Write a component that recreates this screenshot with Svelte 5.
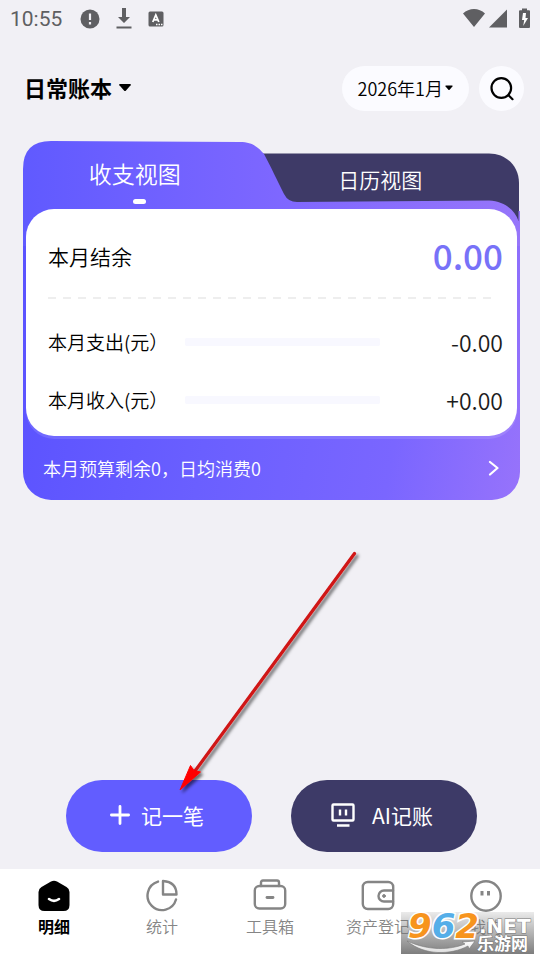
<script>
  const rows = [
    { id: 'expense', label: '本月支出(元）', value: '-0.00' },
    { id: 'income', label: '本月收入(元）', value: '+0.00' }
  ];
  const nav = [
    { id: 'detail', label: '明细' },
    { id: 'stats', label: '统计' },
    { id: 'tools', label: '工具箱' },
    { id: 'assets', label: '资产登记' },
    { id: 'mine', label: '我的' }
  ];
  let view = $state('flow');
  let page = $state('detail');
</script>

<div class="app">
  <div class="status">
    <span class="clock">10:55</span>
    <svg class="s-alert" width="20" height="20" viewBox="0 0 20 20"><circle cx="10" cy="10" r="9.5" fill="#5f5f62" /><path d="M10 4.5v6.5M10 13v2.4" stroke="#f1f0f5" stroke-width="2.2" /></svg>
    <svg class="s-down" width="16" height="21" viewBox="0 0 16 21" fill="#5f5f62"><path d="M6 0h4v9h4l-6 6-6-6h4zM0.500 18.500h15v2h-15z" /></svg>
    <svg width="16" height="16" viewBox="0 0 16 16"><rect x="0.500" y="0.500" width="15" height="15" rx="1.500" fill="#5f5f62" /><path d="M4.800 11 7.800 4 10.800 11M5.800 8.800h4" fill="none" stroke="#fff" stroke-width="1.800" /><path d="M8 13.500h1.500M10.500 13.500H12M13 13.500h1.500" stroke="#fff" stroke-width="1.300" /></svg>
    <span class="grow"></span>
    <svg class="signals" width="67" height="20" viewBox="0 0 67 20" fill="#5f5f62">
      <path d="M0 5.500C6-0.500 16-0.500 22 5.500L11 19zM44 1.500V19.500H26zM66 2.200h-2V0.500h-5v1.700h-2q-1 0-1 1V19q0 1 1 1h9q1 0 1-1V3.200q0-1-1-1z" />
      <path d="M63 5h-3l-1 7h2.200l-1 6 4.800-8h-2.500z" fill="#fff" />
    </svg>
  </div>

  <header>
    <button class="book">日常账本 <svg width="14" height="9" viewBox="0 0 14 9"><path d="M2 1h10q1.500 0 0.600 1.200L8 7.500q-1 1-2 0L1.400 2.200Q0.500 1 2 1z" /></svg></button>
    <span class="grow"></span>
    <button class="month">2026年1月<svg width="8" height="6" viewBox="0 0 8 6"><path d="M1 0.500h6q1 0 0.400 0.900L4.600 4.700q-0.600 0.600-1.200 0L0.600 1.400Q0 0.500 1 0.500z" /></svg></button>
    <button class="search" aria-label="搜索"><svg width="24" height="24" viewBox="0 0 24 24" fill="none" stroke="#000" stroke-width="2.200" stroke-linecap="round"><circle cx="11.300" cy="11" r="9.800" /><path d="m18.500 18.200 4 4" /></svg></button>
  </header>

  <main>
    <section class="card">
      <svg class="shape" viewBox="0 0 497 105" preserveAspectRatio="none" aria-hidden="true">
        <defs>
          <linearGradient id="tabFill" x1="0" y1="0" x2="1" y2="0">
            <stop offset="0" stop-color="#605aff" />
            <stop offset="0.550" stop-color="#8068ff" />
            <stop offset="1" stop-color="#9675fa" />
          </linearGradient>
        </defs>
        <path d="M225 12.500H466C483 12.500 496 25 496 42V90H225z" fill="#3e3a67" />
        <path d="M0 105V28Q0 0 28 0L217 1C230 1 236 7 241 13C247 24 255 41 261 53Q265 61 274 61L466 59.500C482 60 492 70 495.500 80V70H497V105z" fill="url(#tabFill)" />
      </svg>
      <div class="tabs" role="tablist">
        <button class="tab flow" role="tab" aria-selected={view === 'flow'} onclick={() => (view = 'flow')}><span>收支视图</span><i></i></button>
        <button class="tab calendar" role="tab" aria-selected={view === 'calendar'} onclick={() => (view = 'calendar')}><span>日历视图</span></button>
      </div>
      <div class="panel">
        <div class="balance"><span>本月结余</span><strong>0.00</strong></div>
        <div class="dashes"></div>
        {#each rows as row}
          <div class="row">
            <label for={row.id}>{row.label}</label>
            <progress id={row.id} value="0" max="1"></progress>
            <span class="amount">{row.value}</span>
          </div>
        {/each}
      </div>
      <a class="budget" href="#budget">
        <span>本月预算剩余0，日均消费0</span>
        <svg width="12" height="16" viewBox="0 0 12 16" fill="none" stroke="#fff" stroke-width="2.200" stroke-linecap="round" stroke-linejoin="round"><path d="m2 2 7.500 6L2 14.500" /></svg>
      </a>
    </section>
  </main>

  <div class="actions">
    <button class="add">
      <svg width="20" height="20" viewBox="0 0 20 20" stroke="#fff" stroke-width="2.800" stroke-linecap="round"><path d="M10 1.400v17.200M1.400 10h17.200" /></svg>
      记一笔
    </button>
    <button class="ai">
      <svg width="24" height="24" viewBox="0 0 24 24" fill="none" stroke="#fff" stroke-width="2.400"><rect x="1.500" y="1.500" width="21" height="16" rx="1" /><path d="M9 6.500v6M15 6.500v6M6 22.500h12.500" /></svg>
      AI记账
    </button>
    <svg class="arrow" width="190" height="250" viewBox="0 0 190 250" aria-hidden="true">
      <defs><filter id="soft" x="-10%" y="-10%" width="120%" height="120%"><feDropShadow dx="2.500" dy="2.500" stdDeviation="1.800" flood-color="#000" flood-opacity="0.550" /></filter></defs>
      <g filter="url(#soft)">
        <path d="M178.500 3.500 19 221" stroke="#d01414" stroke-width="3.200" stroke-linecap="round" />
        <path d="M4 240 14.500 215.500l3.500 5 6.500 1.500z" fill="#f00" stroke="#f00" stroke-width="1" />
      </g>
    </svg>
  </div>

  <nav>
    {#each nav as item}
      <button class:active={page === item.id} onclick={() => (page = item.id)}>
        <svg width="34" height="34" viewBox="0 0 34 34" fill="none" stroke="#858585" stroke-width="2.400" stroke-linecap="round" stroke-linejoin="round">
          {#if item.id === 'detail'}
            <path d="M14 2.500q3-1.600 6 0l9.500 5.500q3 1.800 3 5V26q0 6-6 6H7.500q-6 0-6-6V13q0-3.200 3-5z" fill="#000" stroke="none" />
            <path d="M12 20q5 3.600 10 0" stroke="#fff" stroke-width="2.600" />
          {:else if item.id === 'stats'}
            <path d="M13 2.600A14.500 14.500 0 1 0 31 20.500" />
            <path d="M18 2v13.500h13.500Q31.500 3 18 2z" />
          {:else if item.id === 'tools'}
            <rect x="1.800" y="7" width="30.400" height="22.500" rx="4.500" />
            <path d="M8 7V3.500q0-2 2-2h14q2 0 2 2V7" />
            <path d="M14 18.500h6" stroke-width="2.800" />
          {:else if item.id === 'assets'}
            <rect x="1.800" y="3" width="30.400" height="27" rx="5" />
            <path d="M32 11.500h-9a5.500 5.500 0 0 0 0 11h9" />
            <circle cx="23" cy="17" r="1.400" fill="#858585" stroke-width="1" />
          {:else}
            <circle cx="17" cy="17" r="14.700" />
            <path d="M13 12v4.500M19.500 12v4.500" stroke-width="3" stroke-linecap="butt" />
          {/if}
        </svg>
        <span>{item.label}</span>
      </button>
    {/each}
    <svg class="mark" width="133" height="42" viewBox="0 0 133 42" aria-hidden="true">
      <defs>
        <linearGradient id="shade" x1="0" y1="0" x2="0" y2="1"><stop offset="0" stop-color="#777" stop-opacity="0.150" /><stop offset="1" stop-color="#777" stop-opacity="0.950" /></linearGradient>
        <linearGradient id="steel" x1="0" y1="0" x2="0" y2="1"><stop offset="0" stop-color="#fff" /><stop offset="1" stop-color="#ddd" /></linearGradient>
      </defs>
      <rect width="133" height="42" fill="url(#shade)" />
      <text class="digits" x="7" y="26"><tspan fill="#f7941d">9</tspan><tspan fill="#55aee8">6</tspan><tspan fill="#f7941d">2</tspan></text>
      <text class="net" x="78" y="21">.NET</text>
      <text class="site" x="76" y="38">乐游网</text>
      <path d="M6 29C24 44 50 43 67 34l1 3 6-8-13 1 3 2C49 38 28 39 6 29z" fill="url(#steel)" stroke="#777" stroke-width="0.600" />
    </svg>
  </nav>
</div>

<style>
  :global(body) { margin: 0; background: #f1f0f5; }
  .app {
    position: relative;
    display: flex;
    flex-direction: column;
    min-height: 100vh;
    background: #f1f0f5;
    color: #000;
    font-family: "Noto Sans CJK SC", sans-serif;
    font-weight: 350;
  }
  button {
    border: 0;
    padding: 0;
    background: none;
    color: inherit;
    font: inherit;
    white-space: nowrap;
    cursor: pointer;
  }
  svg { flex: none; }
  .grow { flex: 1; }

  .status { display: flex; align-items: center; height: 37px; padding: 0 10px; }
  .clock { width: 70px; color: #5f5f62; font: 21px/24px Roboto, sans-serif; }
  .s-alert { margin-right: 16px; }
  .s-down { margin-right: 16px; }
  .signals { padding-bottom: 2px; }

  header { display: flex; align-items: center; gap: 10px; height: 45px; padding: 29px 16px 30px 24px; }
  .book { display: flex; align-items: center; gap: 6px; padding-bottom: 3px; font-size: 22px; line-height: 32px; font-weight: 700; }
  .month {
    display: flex;
    align-items: center;
    gap: 2px;
    height: 45px;
    padding: 0 16px 1px;
    border-radius: 24px;
    background: #fbfbff;
    font-size: 18px;
  }
  .search { display: grid; place-items: center; width: 45px; height: 45px; border-radius: 50%; background: #fbfbff; }

  main { flex: 1; padding: 0 20px 0 23px; }
  .card {
    position: relative;
    border-radius: 28px;
    background: linear-gradient(100deg, #5a52ff 0%, #6a5fff 40%, #7a66ff 75%, #9773fb 100%);
    background-size: 100% 260px;
    background-position: bottom;
    background-repeat: no-repeat;
    color: #fff;
  }
  .shape { position: absolute; top: 0; left: 0; width: 100%; height: 105px; }
  .tabs { position: relative; display: flex; height: 68px; }
  .tab { display: flex; flex-direction: column; align-items: center; }
  .flow { width: 47%; font-size: 23px; }
  .flow span { margin-top: 15px; padding-right: 10px; line-height: 34px; }
  .flow i { width: 13px; height: 5px; margin-top: 9px; border-radius: 3px; background: #fff; }
  .calendar { flex: 1; font-size: 21px; }
  .calendar span { margin-top: 21px; padding-right: 16px; line-height: 34px; }

  .panel {
    position: relative;
    margin: 0 3px;
    padding: 23px 14px 7px 22px;
    border-radius: 28px;
    background: #fff;
    box-shadow: 0 3px 0 rgba(255, 255, 255, 0.12);
    color: #000;
  }
  .balance { display: flex; align-items: center; justify-content: space-between; height: 48px; font-size: 21px; }
  .balance strong { padding-bottom: 2px; color: #7872f8; font-size: 35px; font-weight: 500; line-height: 44px; }
  .dashes {
    height: 2px;
    margin: 17px 12px 14px 0;
    background: repeating-linear-gradient(90deg, #eee 0 8px, transparent 8px 15px);
  }
  .row { display: flex; align-items: center; height: 58px; font-size: 19px; line-height: 28px; }
  .row label { width: 137px; }
  progress { flex: 1; min-width: 0; height: 8px; border: 0; border-radius: 2px; appearance: none; background: #f8f8ff; }
  progress::-webkit-progress-bar { border-radius: 2px; background: #f8f8ff; }
  .amount { width: 123px; padding-bottom: 1px; color: #1c1c1c; font-size: 23px; text-align: right; }

  .budget {
    display: flex;
    align-items: center;
    justify-content: space-between;
    height: 64px;
    padding: 0 20px;
    color: #fff;
    font-size: 18px;
    text-decoration: none;
  }

  .actions { position: relative; display: flex; justify-content: center; gap: 39px; padding: 24px 0 17px 3px; }
  .actions button {
    display: flex;
    align-items: center;
    justify-content: center;
    box-sizing: border-box;
    width: 186px;
    height: 72px;
    padding: 0 4px 2px 0;
    border-radius: 36px;
    color: #fff;
    font-size: 21px;
    font-weight: 400;
  }
  .actions .add { gap: 11px; background: #625dff; }
  .actions .ai { gap: 17px; background: #3d3a67; }
  .arrow { position: absolute; left: calc(50% - 94px); bottom: 69px; pointer-events: none; }

  nav { position: relative; display: grid; grid-template-columns: repeat(5, 1fr); height: 91px; background: #fff; }
  nav button { display: flex; flex-direction: column; align-items: center; gap: 1px; padding-top: 10px; color: #858585; font-size: 16px; }
  nav span { line-height: 24px; }
  nav .active { color: #000; font-weight: 700; }
  .mark { position: absolute; right: 6px; bottom: 6px; overflow: visible; pointer-events: none; }
  .digits { font: italic 700 34px "DejaVu Sans", sans-serif; stroke: #fff; stroke-width: 3px; paint-order: stroke; }
  .net { font: 700 20px "DejaVu Sans", sans-serif; fill: #fff; stroke: #777; stroke-width: 1px; paint-order: stroke; }
  .site { font: 700 17px "Noto Sans CJK SC", sans-serif; fill: #fff; stroke: #777; stroke-width: 1px; paint-order: stroke; }
</style>
